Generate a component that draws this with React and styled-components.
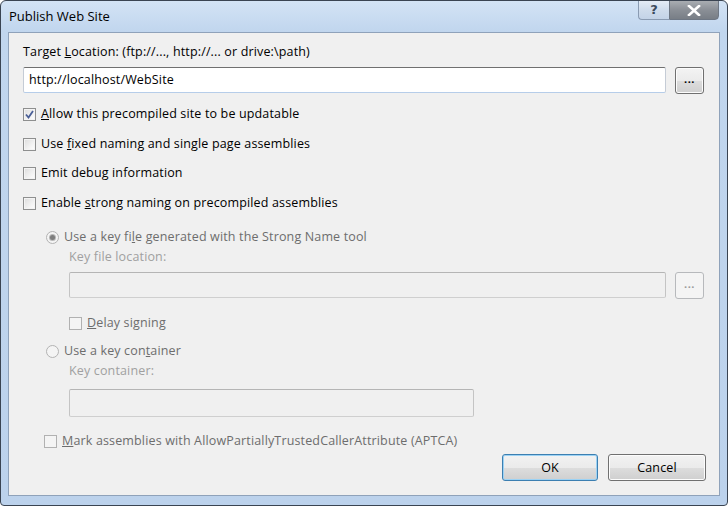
import React from "react";
import styled, { createGlobalStyle } from "styled-components";

const GlobalStyle = createGlobalStyle`
  html, body {
    margin: 0;
    padding: 0;
    background: #ffffff;
  }
  body {
    font-family: "Open Sans", "Noto Sans", sans-serif;
    font-size: 12.5px;
    letter-spacing: 0.15px;
    color: #000;
  }
`;

function Checkbox({ checked, disabled }) {
  return (
    <Box $disabled={disabled}>
      {checked && (
        <svg width="9" height="9" viewBox="0 0 9 9">
          <path
            d="M1 4.5 L3.5 7.5 L8 1"
            fill="none"
            stroke="#4a5f97"
            strokeWidth="1.8"
          />
        </svg>
      )}
    </Box>
  );
}

function Radio({ selected }) {
  return <RadioCircle>{selected && <RadioDot />}</RadioCircle>;
}

function Option({ checked, disabled, indent, gap, children }) {
  return (
    <OptionRow $indent={indent} $gap={gap} $disabled={disabled}>
      <Checkbox checked={checked} disabled={disabled} />
      <span>{children}</span>
    </OptionRow>
  );
}

export default function App() {
  return (
    <>
      <GlobalStyle />
      <Window>
        <TitleBar>
          <Title>Publish Web Site</Title>
          <Controls>
            <HelpButton>?</HelpButton>
            <CloseButton>
              <svg width="14" height="11" viewBox="0 0 14 11">
                <path
                  d="M2 1 L12 10 M12 1 L2 10"
                  stroke="#ffffff"
                  strokeWidth="2.6"
                  strokeLinecap="square"
                />
              </svg>
            </CloseButton>
          </Controls>
        </TitleBar>
        <Frame>
          <Client>
            <Label $gap={11}>
              Target <u>L</u>ocation: (ftp://..., http://... or drive:\path)
            </Label>
            <FieldRow $gap={6}>
              <TextBox>http://localhost/WebSite</TextBox>
              <BrowseButton>...</BrowseButton>
            </FieldRow>

            <Option checked gap={12}>
              <u>A</u>llow this precompiled site to be updatable
            </Option>
            <Option gap={14}>
              Use <u>f</u>ixed naming and single page assemblies
            </Option>
            <Option gap={13}>
              Emit debu<u>g</u> information
            </Option>
            <Option gap={14}>
              Enable <u>s</u>trong naming on precompiled assemblies
            </Option>

            <RadioRow $gap={18}>
              <Radio selected />
              <span>
                Use a key fi<u>l</u>e generated with the Strong Name tool
              </span>
            </RadioRow>
            <SubLabel $gap={4}>Key file location:</SubLabel>
            <FieldRow $gap={6} $indent={46}>
              <TextBox $disabled />
              <BrowseButton $disabled>...</BrowseButton>
            </FieldRow>
            <Option disabled indent={46} gap={16}>
              <u>D</u>elay signing
            </Option>

            <RadioRow $gap={12}>
              <Radio />
              <span>
                Use a key con<u>t</u>ainer
              </span>
            </RadioRow>
            <SubLabel $gap={4}>Key container:</SubLabel>
            <ContainerBox />

            <Option disabled indent={21} gap={16}>
              <u>M</u>ark assemblies with AllowPartiallyTrustedCallerAttribute
              (APTCA)
            </Option>

            <ButtonBar>
              <DialogButton $default>OK</DialogButton>
              <DialogButton>Cancel</DialogButton>
            </ButtonBar>
          </Client>
        </Frame>
      </Window>
    </>
  );
}

const Window = styled.div`
  width: 728px;
  height: 506px;
  box-sizing: border-box;
  display: flex;
  flex-direction: column;
  border: 1px solid #3a4452;
  border-radius: 6px 6px 4px 4px;
  background: linear-gradient(180deg, #d3e3f5 0px, #c1d6ee 30px, #bcd2ec 100%);
  overflow: hidden;
`;

const TitleBar = styled.div`
  height: 31px;
  display: flex;
  align-items: flex-start;
  justify-content: space-between;
  padding-left: 8px;
  flex-shrink: 0;
`;

const Title = styled.div`
  margin-top: 6px;
  font-size: 13px;
  letter-spacing: 0;
  color: #000;
`;

const Controls = styled.div`
  display: flex;
  margin-right: 8px;
  margin-top: -1px;
`;

const HelpButton = styled.div`
  width: 31px;
  height: 20px;
  box-sizing: border-box;
  border: 1px solid #8a9bb2;
  border-right: none;
  border-radius: 0 0 0 4px;
  background: linear-gradient(180deg, #e4ecf6 0%, #cfdcec 50%, #c3d3e7 100%);
  color: #3c4a5c;
  font-family: "DejaVu Sans", sans-serif;
  font-weight: bold;
  font-size: 13px;
  line-height: 18px;
  text-align: center;
`;

const CloseButton = styled.div`
  width: 50px;
  height: 20px;
  box-sizing: border-box;
  border: 1px solid #6e7784;
  border-radius: 0 0 4px 0;
  background: linear-gradient(180deg, #a9adb2 0%, #8a8f96 50%, #787e86 100%);
  display: flex;
  align-items: center;
  justify-content: center;
`;

const Frame = styled.div`
  flex: 1;
  padding: 0 7px 9px 7px;
  display: flex;
`;

const Client = styled.div`
  flex: 1;
  border: 1px solid #8fa2ba;
  background: #f0f0f0;
  padding: 0 13px 0 14px;
  display: flex;
  flex-direction: column;
  color: #000;
`;

const Label = styled.div`
  margin-top: ${(p) => p.$gap}px;
  height: 16px;
  line-height: 16px;
`;

const SubLabel = styled.div`
  margin-top: ${(p) => p.$gap}px;
  margin-left: 46px;
  height: 16px;
  line-height: 16px;
  color: #a0a0a0;
`;

const FieldRow = styled.div`
  margin-top: ${(p) => p.$gap}px;
  margin-left: ${(p) => p.$indent || 0}px;
  margin-right: 2px;
  display: flex;
  align-items: center;
  gap: 9px;
  height: 28px;
`;

const TextBox = styled.div`
  flex: 1;
  height: 26px;
  box-sizing: border-box;
  border: 1px solid;
  border-color: ${(p) =>
    p.$disabled ? "#b5b5b5 #c4c4c4 #cfcfcf #c4c4c4" : "#707070 #c5ccd6 #b6cde9 #c5ccd6"};
  border-radius: 2px;
  background: ${(p) => (p.$disabled ? "#f0f0f0" : "#ffffff")};
  padding-left: 5px;
  line-height: 24px;
`;

const BrowseButton = styled.div`
  width: 29px;
  height: 27px;
  box-sizing: border-box;
  border: 1px solid ${(p) => (p.$disabled ? "#b7b9bc" : "#707070")};
  border-radius: 3px;
  background: ${(p) =>
    p.$disabled
      ? "#f4f4f4"
      : "linear-gradient(180deg, #f3f3f3 0%, #ebebeb 50%, #dddddd 51%, #cfcfcf 100%)"};
  box-shadow: inset 0 0 0 1px ${(p) => (p.$disabled ? "#f4f4f4" : "#fcfcfc")};
  color: ${(p) => (p.$disabled ? "#9a9a9a" : "#000")};
  font-size: 11px;
  font-weight: bold;
  text-align: center;
  line-height: 22px;
  letter-spacing: 0.5px;
`;

const OptionRow = styled.div`
  margin-top: ${(p) => p.$gap}px;
  margin-left: ${(p) => p.$indent || 0}px;
  height: 16px;
  display: flex;
  align-items: center;
  gap: 5px;
  line-height: 16px;
  color: ${(p) => (p.$disabled ? "#6d6d6d" : "#000")};
`;

const Box = styled.span`
  width: 13px;
  height: 13px;
  box-sizing: border-box;
  border: 1px solid ${(p) => (p.$disabled ? "#b1b1b1" : "#8e8f8f")};
  background: ${(p) =>
    p.$disabled
      ? "#f4f4f4"
      : "linear-gradient(135deg, #dcdcdc 0%, #f2f2f2 60%, #ffffff 100%)"};
  box-shadow: inset 0 0 0 1px #f4f4f4;
  display: flex;
  align-items: center;
  justify-content: center;
  flex-shrink: 0;
`;

const RadioRow = styled.div`
  margin-top: ${(p) => p.$gap}px;
  margin-left: 23px;
  height: 16px;
  display: flex;
  align-items: center;
  gap: 5px;
  line-height: 16px;
  color: #6d6d6d;
`;

const RadioCircle = styled.span`
  width: 13px;
  height: 13px;
  box-sizing: border-box;
  border-radius: 50%;
  border: 1px solid #b3b3b3;
  background: #f4f4f4;
  display: flex;
  align-items: center;
  justify-content: center;
  flex-shrink: 0;
`;

const RadioDot = styled.span`
  width: 5px;
  height: 5px;
  border-radius: 50%;
  background: #7e7e7e;
  box-shadow: 0 0 0 1px #b8b8b8;
`;

const ContainerBox = styled.div`
  margin-top: 10px;
  margin-left: 46px;
  width: 405px;
  height: 28px;
  box-sizing: border-box;
  border: 1px solid;
  border-color: #b5b5b5 #c4c4c4 #cfcfcf #c4c4c4;
  border-radius: 2px;
`;

const ButtonBar = styled.div`
  margin-top: 5px;
  display: flex;
  justify-content: flex-end;
  gap: 10px;
`;

const DialogButton = styled.div`
  width: ${(p) => (p.$default ? "96px" : "98px")};
  height: 27px;
  box-sizing: border-box;
  border: 1px solid ${(p) => (p.$default ? "#3c7fb1" : "#707070")};
  border-radius: 3px;
  background: linear-gradient(180deg, #f2f2f2 0%, #ebebeb 50%, #dddddd 51%, #cfcfcf 100%);
  box-shadow: inset 0 0 0 1px ${(p) => (p.$default ? "#9cd2f4" : "#fcfcfc")};
  text-align: center;
  line-height: 25px;
`;
